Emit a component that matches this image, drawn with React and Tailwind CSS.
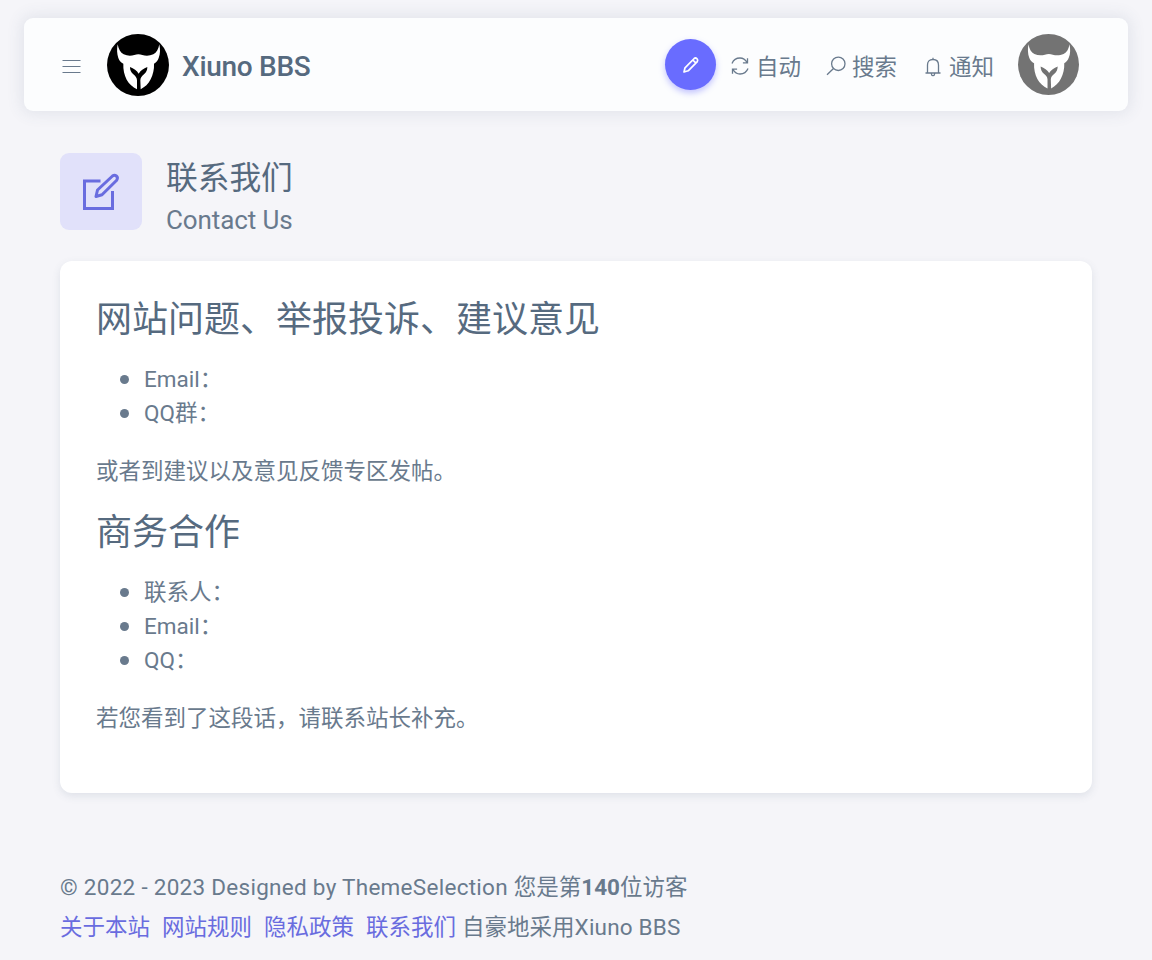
const footerLinks = ['关于本站', '网站规则', '隐私政策', '联系我们'];

function Logo({ className }) {
  return (
    <svg viewBox="1 3 186 186" className={className}>
      <circle cx="94" cy="96" r="93" fill="currentColor" />
      <path
        d="M33 34C36 49 41 59 51 64C62 69 73 69 83 66C91 63 99 63 107 66C117 69 129 69 140 64C150 59 155 49 158 34C161 49 161 63 156 75C153 84 148 89 142 92C143 109 139 124 132 139C125 153 115 162 102 169L101 142C101 134 106 129 112 124C119 118 122 111 122 102C111 106 101 113 96 122C91 113 81 106 70 102C70 111 73 118 80 124C86 129 91 134 91 142L91 169C78 162 67 153 60 140C53 126 49 109 50 92C43 89 38 84 35 75C31 63 30 49 33 34Z"
        fill="#fff"
      />
    </svg>
  );
}

function NavItem({ icon, label, className }) {
  return (
    <a className={`flex items-center ${className}`}>
      {icon}
      <span className="pt-1">{label}</span>
    </a>
  );
}

function Navbar() {
  return (
    <nav className="mx-6 flex h-[93px] items-center rounded-[9px] bg-[#fcfdfe] pr-[49px] pl-[38px] shadow-[0_0_15px_3px_rgba(67,89,113,0.1)]">
      <svg viewBox="0 0 20 20" className="mt-1 size-5" fill="none" stroke="#697a8d" strokeWidth="1.2">
        <path d="M.5 3.500h18M.5 9.500h18M.5 15.500h18" />
      </svg>
      <Logo className="ml-[25px] size-[62px] text-black" />
      <span className="ml-[13px] pt-1 text-[28px] font-medium tracking-[-0.3px] text-[#566a7f]">Xiuno BBS</span>

      <div className="ml-auto flex items-center">
        <button className="flex size-[51px] items-center justify-center rounded-full bg-[#696cff] shadow-[0_3px_6px_rgba(105,108,255,0.4)]">
          {/* pencil */}
          <svg viewBox="0 0 20 20" className="ml-[2px] size-5" fill="none" stroke="#fff" strokeWidth="1.7" strokeLinejoin="round">
            <path d="M3 17l1-4.200L13.200 3.500q1.300-1.100 2.700.2t.4 2.900L7.200 15.800L3 17ZM11.800 5l3.200 3.200" />
          </svg>
        </button>
        <NavItem
          className="ml-[14px] gap-[6px]"
          label="自动"
          icon={
            <svg viewBox="0 0 20 20" className="mt-[3px] size-5" fill="none" stroke="currentColor" strokeWidth="1.3">
              <path d="M2 7.500Q4.200 2 10 2Q14.500 2 17 6.500M17.500 2.200v4.600h-4.600M18 12.500Q15.800 18 10 18Q5.500 18 3 13.500M2.500 17.800v-4.600h4.600" />
            </svg>
          }
        />
        <NavItem
          className="ml-[25px] gap-[6px]"
          label="搜索"
          icon={
            <svg viewBox="0 0 20 20" className="mt-[3px] size-5" fill="none" stroke="currentColor" strokeWidth="1.3">
              <circle cx="12.300" cy="7.800" r="6.700" />
              <path d="M7.500 12.500L1 18.800" />
            </svg>
          }
        />
        <NavItem
          className="ml-[26px] gap-[6px]"
          label="通知"
          icon={
            <svg viewBox="0 0 20 20" className="mt-[4px] size-5" fill="none" stroke="currentColor" strokeWidth="1.3">
              <path d="M4.500 16V8Q4.500 2.500 10 2.500T15.500 8V16M2.500 16h15M10 .8v1.700M8.200 16.500Q8.500 18.700 10 18.700T11.800 16.500" />
            </svg>
          }
        />
        <Logo className="ml-[24px] size-[61px] text-[#737373]" />
      </div>
    </nav>
  );
}

function PageTitle() {
  return (
    <header className="mt-[42px] flex h-[108px] items-start">
      <div className="flex h-[77px] w-[82px] items-center justify-center rounded-[9px] bg-[#e1e1fa]">
        <svg viewBox="0 0 40 40" className="size-10" fill="none" stroke="#696cdf" strokeWidth="3">
          <path d="M19.500 9H3.500V36.500H31.500V19" />
          <path d="M15 24.500l1.500-6.500L31.500 4q2-1.500 3.900 0t.3 4.200L21 22.800Z" strokeLinejoin="round" />
        </svg>
      </div>
      <div className="ml-6">
        <h1 className="mt-[6px] text-[31.7px] leading-[39px] text-[#566a7f]">联系我们</h1>
        <p className="mt-[3px] text-[26px] leading-[38px] tracking-[-0.1px]">Contact Us</p>
      </div>
    </header>
  );
}

function SectionHeading({ children }) {
  return <h2 className="pt-[2px] text-[36px] leading-[43px] text-[#566a7f]">{children}</h2>;
}

function ContactList({ items }) {
  return (
    <ul className="mt-[20px] mb-[24px] pl-6">
      {items.map((item) => (
        <li
          key={item}
          className="flex items-center gap-[15px] before:size-[9px] before:rounded-full before:bg-[#697a8d]"
        >
          {item}
        </li>
      ))}
    </ul>
  );
}

export default function App() {
  return (
    <div
      className='min-h-[960px] bg-[#f5f5f9] pt-[18px] font-["Roboto","Noto_Sans_CJK_SC",sans-serif] text-[22.5px] leading-[34px] text-[#697a8d]'
      lang="zh-CN"
    >
      <Navbar />
      <main className="mx-[60px]">
        <PageTitle />
        <section className="h-[532px] rounded-xl bg-white p-9 shadow-[0_3px_9px_rgba(67,89,113,0.12)]">
          <SectionHeading>网站问题、举报投诉、建议意见</SectionHeading>
          <ContactList items={['Email：', 'QQ群：']} />
          <p className="mb-[22px]">或者到建议以及意见反馈专区发帖。</p>
          <SectionHeading>商务合作</SectionHeading>
          <ContactList items={['联系人：', 'Email：', 'QQ：']} />
          <p>若您看到了这段话，请联系站长补充。</p>
        </section>
      </main>
      <footer className="mx-[60px] mt-[74px] leading-[40px]">
        <div>
          <span className="tracking-[0.28px]">© 2022 - 2023 Designed by ThemeSelection </span>
          您是第<b>140</b>位访客
        </div>
        <div className="flex">
          {footerLinks.map((label) => (
            <a key={label} className="mr-3 text-[#696cdf] last-of-type:mr-[6px]">
              {label}
            </a>
          ))}
          <span>
            自豪地采用<span className="tracking-[0.2px]">Xiuno BBS</span>
          </span>
        </div>
      </footer>
    </div>
  );
}
